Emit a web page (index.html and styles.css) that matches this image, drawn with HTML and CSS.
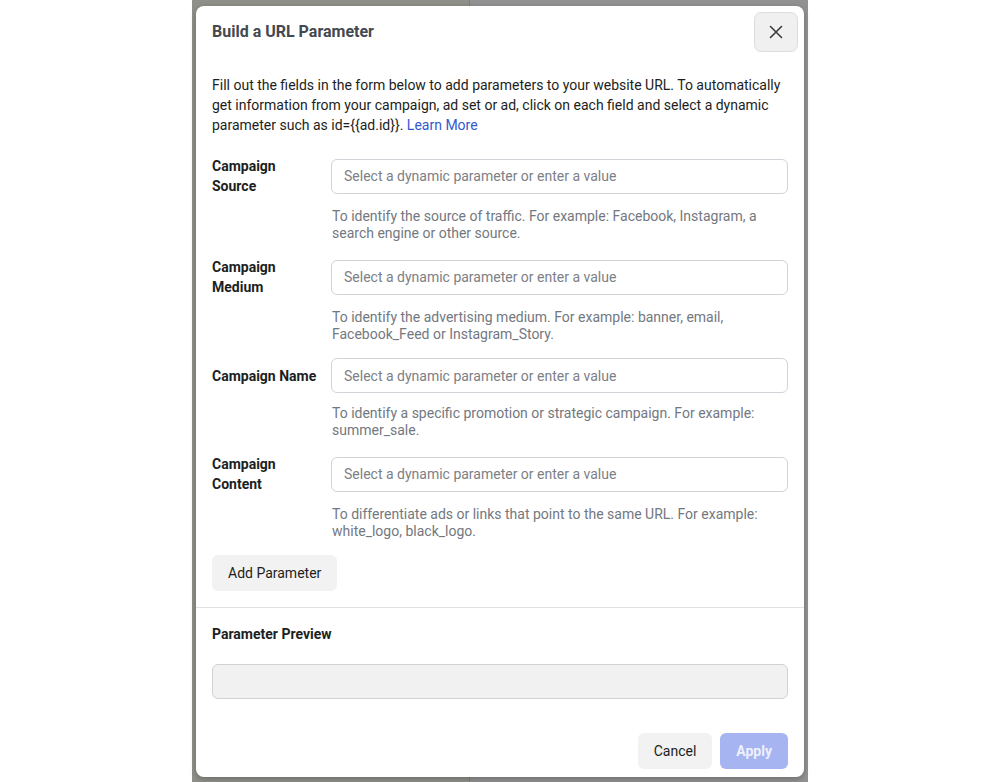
FILE: index.html
```html
<!DOCTYPE html>
<html lang="en">
<head>
<meta charset="utf-8">
<title>Build a URL Parameter</title>
<link rel="stylesheet" href="styles.css">
</head>
<body>
<div class="backdrop">
  <div class="modal">
    <div class="modal-header">
      <h2 class="modal-title">Build a URL Parameter</h2>
      <button class="close-btn" aria-label="Close">
        <svg width="14" height="14" viewBox="0 0 14 14"><path d="M1.5 1.5 L12.5 12.5 M12.5 1.5 L1.5 12.5" stroke="#3a3b3c" stroke-width="1.6" stroke-linecap="round" fill="none"/></svg>
      </button>
    </div>
    <div class="modal-body">
      <p class="intro">Fill out the fields in the form below to add parameters to your website URL. To automatically get information from your campaign, ad set or ad, click on each field and select a dynamic parameter such as id={{ad.id}}. <a class="link" href="#">Learn More</a></p>

      <div class="field">
        <label class="field-label">Campaign Source</label>
        <input class="field-input" type="text" placeholder="Select a dynamic parameter or enter a value">
        <div class="field-help">To identify the source of traffic. For example: Facebook, Instagram, a search engine or other source.</div>
      </div>
      <div class="field">
        <label class="field-label">Campaign Medium</label>
        <input class="field-input" type="text" placeholder="Select a dynamic parameter or enter a value">
        <div class="field-help">To identify the advertising medium. For example: banner, email, Facebook_Feed or Instagram_Story.</div>
      </div>
      <div class="field">
        <label class="field-label">Campaign Name</label>
        <input class="field-input" type="text" placeholder="Select a dynamic parameter or enter a value">
        <div class="field-help">To identify a specific promotion or strategic campaign. For example: summer_sale.</div>
      </div>
      <div class="field">
        <label class="field-label">Campaign Content</label>
        <input class="field-input" type="text" placeholder="Select a dynamic parameter or enter a value">
        <div class="field-help">To differentiate ads or links that point to the same URL. For example: white_logo, black_logo.</div>
      </div>

      <button class="btn btn-gray add-btn">Add Parameter</button>
    </div>
    <div class="divider"></div>
    <div class="preview">
      <div class="preview-title">Parameter Preview</div>
      <div class="preview-box"></div>
    </div>
    <div class="modal-footer">
      <button class="btn btn-gray">Cancel</button>
      <button class="btn btn-primary" disabled>Apply</button>
    </div>
  </div>
</div>
</body>
</html>
```

FILE: styles.css
```css
* { box-sizing: border-box; }

html, body {
  margin: 0;
  padding: 0;
  background: #ffffff;
  font-family: Roboto, "Liberation Sans", Arial, sans-serif;
  color: #1c1e21;
}

.backdrop {
  margin-left: 192px;
  width: 616px;
  height: 782px;
  padding: 6px 4px 5px 4px;
  background:
    linear-gradient(to right, transparent 277px, #7f7f7f 277px, #7f7f7f 278px, transparent 278px),
    linear-gradient(to right, #8f9089 0, #8f9089 277px, #929292 277px);
}

.modal {
  height: 771px;
  background: #ffffff;
  border-radius: 8px;
  box-shadow: 0 2px 6px rgba(0, 0, 0, 0.25);
  display: flex;
  flex-direction: column;
}

.modal-header {
  display: flex;
  align-items: center;
  justify-content: space-between;
  padding: 6px 6px 0 16px;
}

.modal-title {
  margin: 0;
  font-size: 16px;
  font-weight: 700;
  color: #444950;
  line-height: 20px;
}

.close-btn {
  width: 44px;
  height: 40px;
  padding: 0;
  display: flex;
  align-items: center;
  justify-content: center;
  background: #f0f0f0;
  border: 1px solid #dcdcdc;
  border-radius: 7px;
  cursor: pointer;
}

.modal-body {
  padding: 0 16px;
  display: flex;
  flex-direction: column;
  align-items: flex-start;
}

.intro {
  margin: 23px 0 21px;
  font-size: 14px;
  line-height: 20px;
  color: #1c1e21;
}

.link {
  color: #3558cf;
  text-decoration: none;
}

.field {
  width: 576px;
  display: grid;
  grid-template-columns: 107px 457px;
  column-gap: 12px;
  align-items: center;
  margin-bottom: 15px;
}

.field-label {
  grid-column: 1;
  grid-row: 1;
  font-size: 14px;
  font-weight: 700;
  line-height: 20px;
  color: #1c1e21;
}

.field-input {
  grid-column: 2;
  grid-row: 1;
  height: 35px;
  width: 100%;
  padding: 0 12px;
  border: 1px solid #d0d3d8;
  border-radius: 6px;
  font-family: inherit;
  font-size: 14px;
  color: #1c1e21;
  background: #fff;
  outline: none;
}

.field-input::placeholder {
  color: #7d8085;
}

.field-help {
  grid-column: 2;
  grid-row: 2;
  margin-top: 12px;
  padding-left: 1px;
  font-size: 14px;
  line-height: 17px;
  color: #737880;
}

.btn {
  height: 36px;
  padding: 0 16px;
  border: none;
  border-radius: 6px;
  font-family: inherit;
  font-size: 14px;
  cursor: pointer;
}

.btn-gray {
  background: #f2f2f2;
  color: #1c1e21;
}

.btn-primary {
  background: #a6b4f2;
  color: #eef1fd;
  font-weight: 700;
  padding: 0 16px;
}

.add-btn {
  margin-top: 0;
}

.divider {
  margin-top: 16px;
  height: 1px;
  background: #dddfe2;
}

.preview {
  padding: 16px 16px 0;
}

.preview-title {
  font-size: 14px;
  font-weight: 700;
  line-height: 20px;
  color: #1c1e21;
}

.preview-box {
  margin-top: 20px;
  height: 35px;
  background: #f1f1f1;
  border: 1px solid #cfd1d4;
  border-radius: 6px;
}

.modal-footer {
  margin-top: auto;
  display: flex;
  justify-content: flex-end;
  gap: 8px;
  padding: 0 16px 8px;
}
```
